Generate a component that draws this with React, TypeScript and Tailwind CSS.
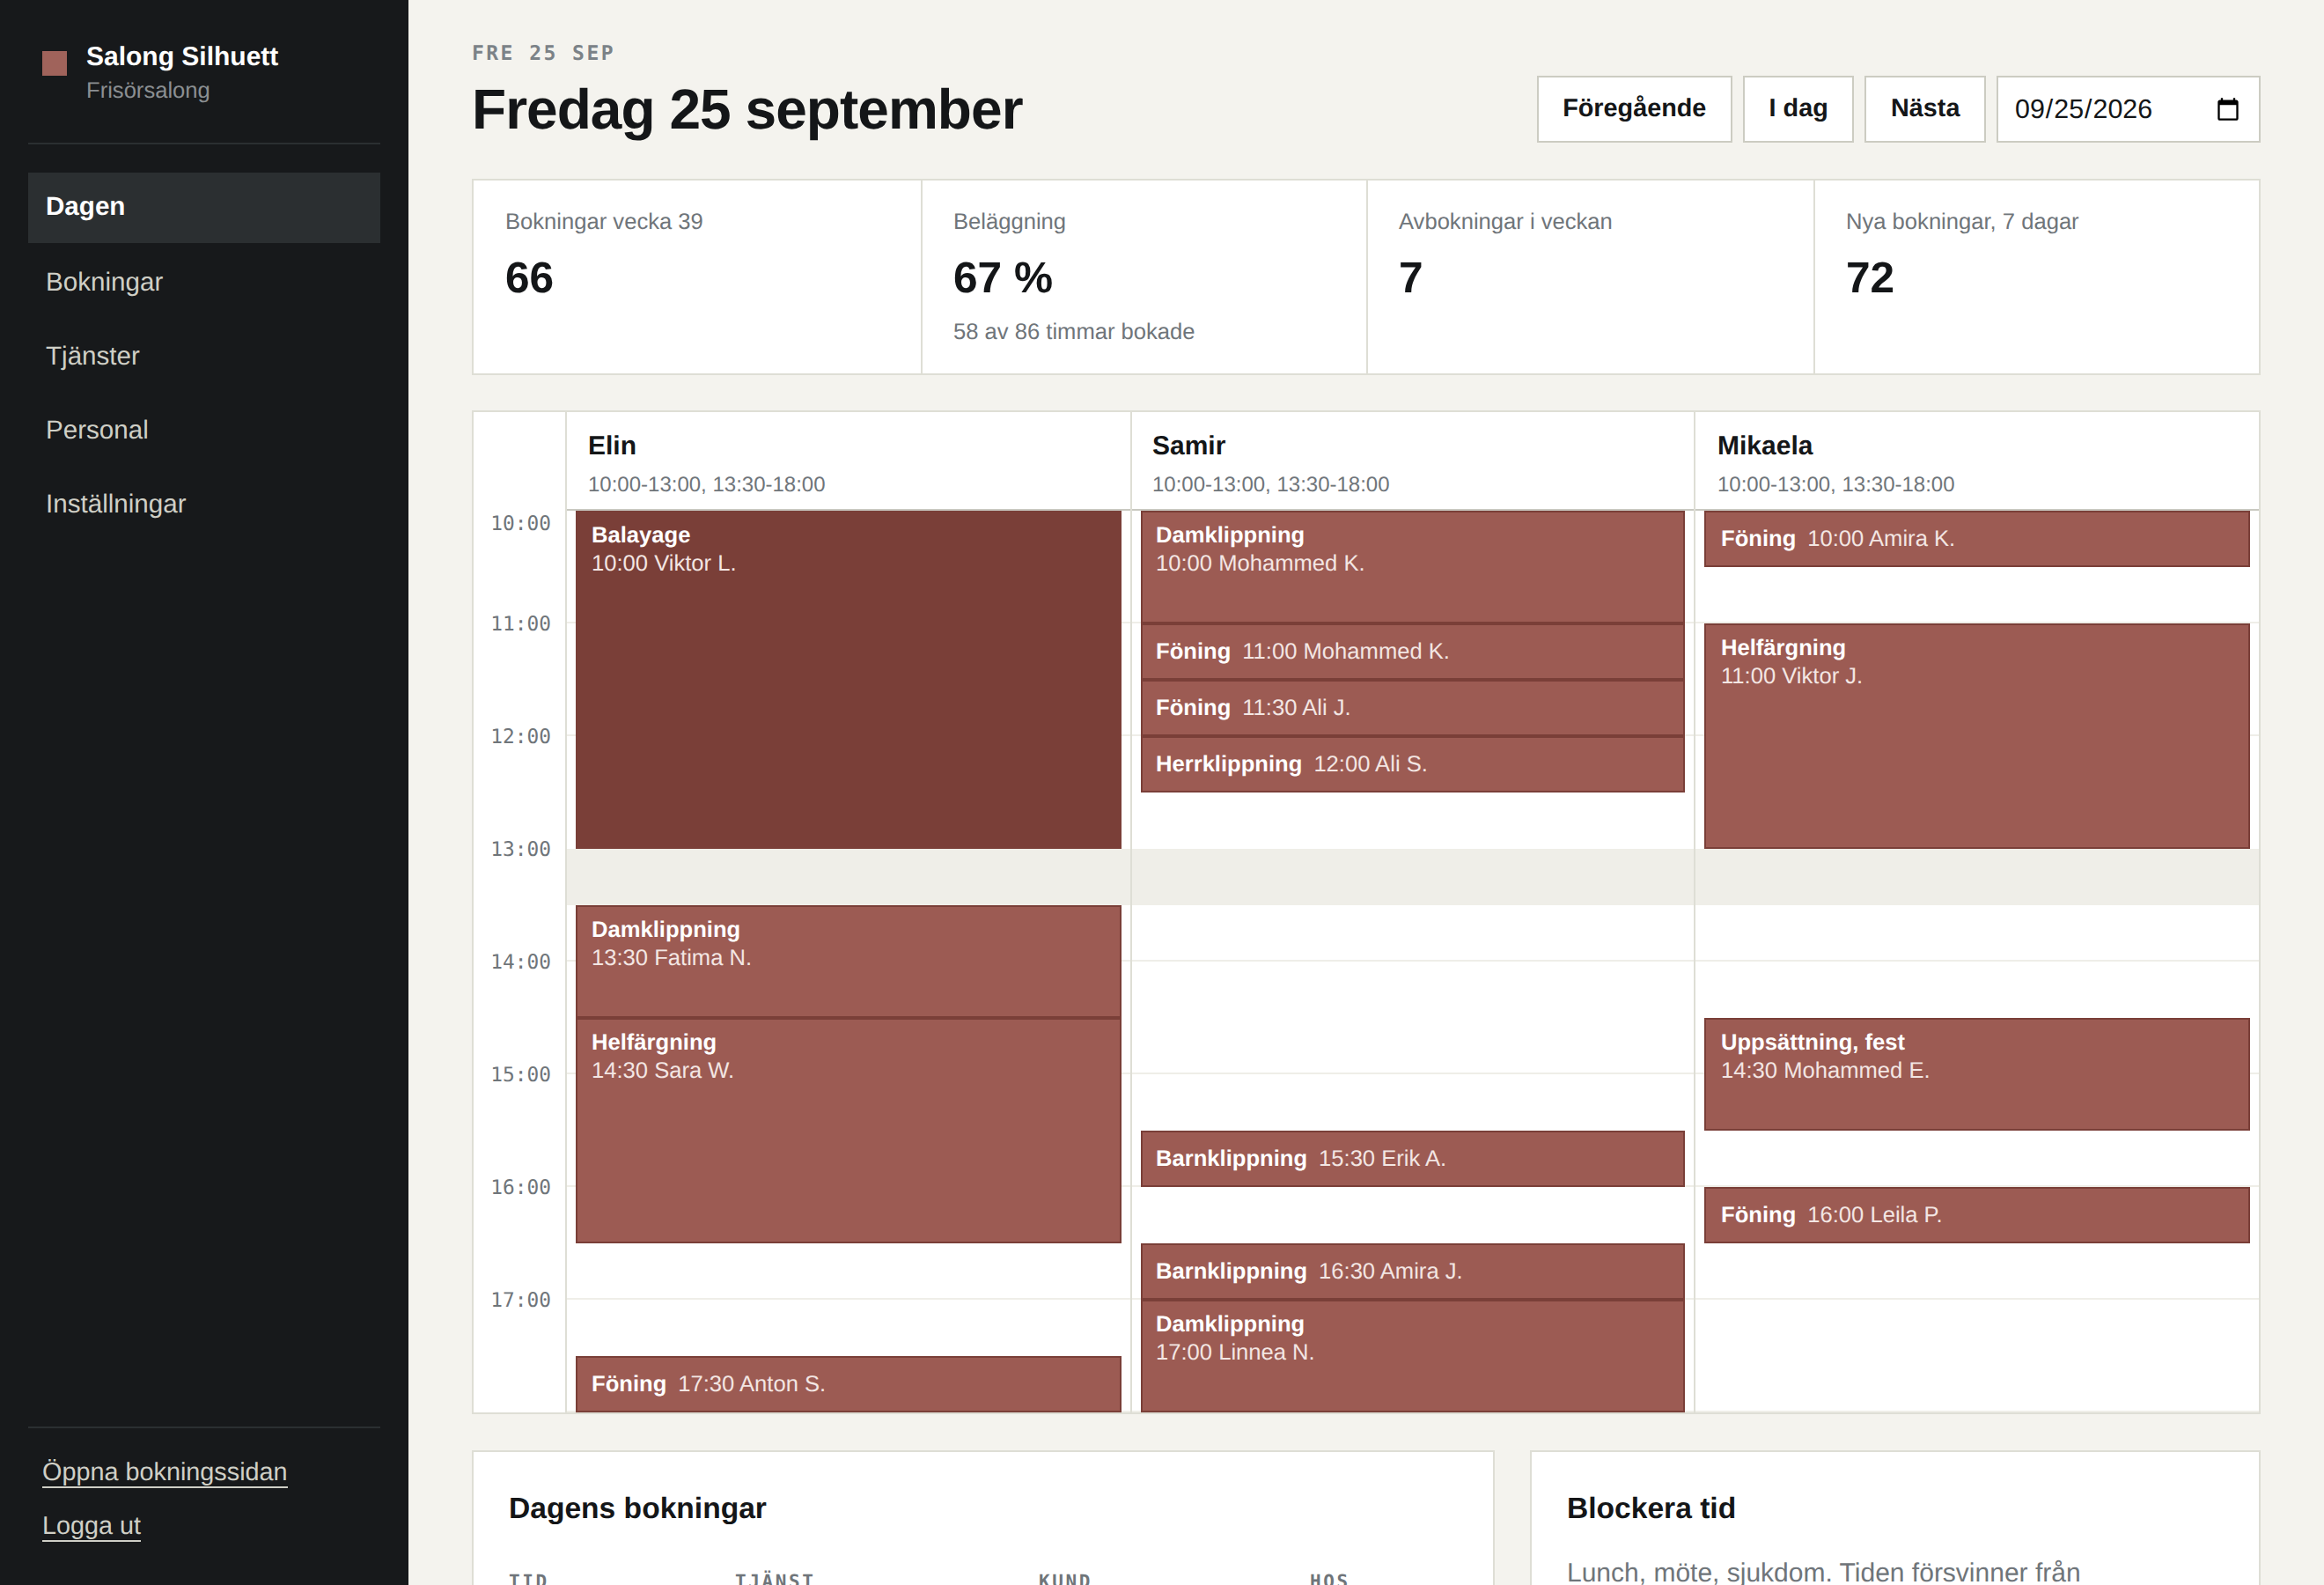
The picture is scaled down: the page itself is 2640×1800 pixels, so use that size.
const sans = "font-['Liberation_Sans',Arial,sans-serif]";

type Ev = { s: number; d: number; t: string; i: string; on?: boolean };
const cols: { name: string; head: string; text: string; ev: Ev[] }[] = [
  {
    name: "Elin",
    head: "pl-[24px]",
    text: "px-[16px]",
    ev: [
      { s: 10, d: 3, t: "Balayage", i: "10:00 Viktor L.", on: true },
      { s: 13.5, d: 1, t: "Damklippning", i: "13:30 Fatima N." },
      { s: 14.5, d: 2, t: "Helfärgning", i: "14:30 Sara W." },
      { s: 17.5, d: 0.5, t: "Föning", i: "17:30 Anton S." },
    ],
  },
  {
    name: "Samir",
    head: "pl-[23px]",
    text: "px-[15px]",
    ev: [
      { s: 10, d: 1, t: "Damklippning", i: "10:00 Mohammed K." },
      { s: 11, d: 0.5, t: "Föning", i: "11:00 Mohammed K." },
      { s: 11.5, d: 0.5, t: "Föning", i: "11:30 Ali J." },
      { s: 12, d: 0.5, t: "Herrklippning", i: "12:00 Ali S." },
      { s: 15.5, d: 0.5, t: "Barnklippning", i: "15:30 Erik A." },
      { s: 16.5, d: 0.5, t: "Barnklippning", i: "16:30 Amira J." },
      { s: 17, d: 1, t: "Damklippning", i: "17:00 Linnea N." },
    ],
  },
  {
    name: "Mikaela",
    head: "pl-[25px]",
    text: "px-[17px]",
    ev: [
      { s: 10, d: 0.5, t: "Föning", i: "10:00 Amira K." },
      { s: 11, d: 2, t: "Helfärgning", i: "11:00 Viktor J." },
      { s: 14.5, d: 1, t: "Uppsättning, fest", i: "14:30 Mohammed E." },
      { s: 16, d: 0.5, t: "Föning", i: "16:00 Leila P." },
    ],
  },
];
const hours = [10, 11, 12, 13, 14, 15, 16, 17];
const stats = [
  { l: "Bokningar vecka 39", v: "66" },
  { l: "Beläggning", v: "67 %", s: "58 av 86 timmar bokade" },
  { l: "Avbokningar i veckan", v: "7" },
  { l: "Nya bokningar, 7 dagar", v: "72" },
];
const HOUR = 128;

function Block({ e, text }: { e: Ev; text: string }) {
  const short = e.d <= 0.5;
  return (
    <div
      className={`absolute left-[10px] right-[10px] border-2 text-[25.6px] leading-[32px] overflow-hidden ${text} ${
        e.on ? "bg-[#7a3f38] border-[#7a3f38]" : "bg-[#9c5b53] border-[#7a3f38]"
      } ${short ? "flex items-center" : "py-[10px]"}`}
      style={{ top: (e.s - 10) * HOUR, height: e.d * HOUR }}
    >
      {short ? (
        <>
          <span className="font-bold text-white mr-[13px]">{e.t}</span>
          <span className="text-[#f3e6e3]">{e.i}</span>
        </>
      ) : (
        <>
          <div className="font-bold text-white">{e.t}</div>
          <div className="text-[#f3e6e3]">{e.i}</div>
        </>
      )}
    </div>
  );
}

function Btn({ children }: { children: string }) {
  return (
    <button className="h-[76px] px-[27.6px] bg-white border-2 border-[#ccccc2] text-[28.8px] font-bold text-[#141618] [text-rendering:geometricPrecision]">
      {children}
    </button>
  );
}

export default function App() {
  return (
    <div className={`flex h-screen overflow-hidden bg-[#f4f3ee] text-[#141618] [text-rendering:geometricPrecision] ${sans}`}>
      <aside className="w-[464px] shrink-0 h-full bg-[#17191b] px-[32px] flex flex-col">
        <div className="flex items-start h-[164px] border-b-2 border-[#2b2f31] pt-[47px] px-[16px]">
          <div className="w-[28px] h-[28px] mt-[11px] bg-[#a0635b] mr-[22px]" />
          <div>
            <div className="text-[30px] leading-[36px] font-bold text-white">Salong Silhuett</div>
            <div className="text-[25.6px] leading-[32px] mt-[4px] text-[#8b8f92]">Frisörsalong</div>
          </div>
        </div>
        <nav className="mt-[32px] flex flex-col gap-[4px] text-[29.6px] text-[#cfcfc6]">
          <div className="h-[80px] flex items-center px-[20px] pb-[2px] bg-[#2b2f31] text-white font-bold">Dagen</div>
          <div className="h-[80px] flex items-center px-[20px] pt-[2px]">Bokningar</div>
          <div className="h-[80px] flex items-center px-[20px] pt-[2px]">Tjänster</div>
          <div className="h-[80px] flex items-center px-[20px] pt-[2px]">Personal</div>
          <div className="h-[80px] flex items-center px-[20px] pt-[2px]">Inställningar</div>
        </nav>
        <div className="mt-auto h-[180px] border-t-2 border-[#2b2f31] pt-[34px] px-[16px] flex flex-col items-start gap-[27px] text-[28.8px] leading-[32px] text-[#cfcfc6]">
          <span className="border-b-2 border-[#cfcfc6]">Öppna bokningssidan</span>
          <span className="border-b-2 border-[#cfcfc6]">Logga ut</span>
        </div>
      </aside>

      <main className="flex-1 min-w-0 h-full overflow-hidden px-[72px] pt-[44px]">
        <header className="flex justify-between items-end h-[118px]">
          <div>
            <div className="font-['DejaVu_Sans_Mono',monospace] font-bold text-[23px] leading-[28px] tracking-[2.45px] text-[#7b8287] -mt-[4px]">
              FRE 25 SEP
            </div>
            <h1 className="mt-[11px] text-[64px] leading-[76px] font-bold tracking-[-0.96px] text-[#141618]">
              Fredag 25 september
            </h1>
          </div>
          <div className="flex gap-[12px] items-center">
            <Btn>Föregående</Btn>
            <Btn>I dag</Btn>
            <Btn>Nästa</Btn>
            <input
              type="date"
              defaultValue="2026-09-25"
              className="w-[300px] h-[76px] px-[18px] pt-[2px] bg-white border-2 border-[#ccccc2] text-[30.4px] text-[#141618] [text-rendering:geometricPrecision]"
            />
          </div>
        </header>

        <section className="mt-[41px] h-[223px] grid grid-cols-[510px_506px_508px_1fr] bg-white border-2 border-[#deded5]">
          {stats.map((s, i) => (
            <div
              key={s.l}
              className={`pt-[31px] ${i === 0 ? "pl-[36px]" : "pl-[35px]"} ${i < 3 ? "border-r-2 border-[#deded5]" : ""}`}
            >
              <div className="text-[25.6px] leading-[32px] text-[#6f757a]">{s.l}</div>
              <div className="mt-[18px] text-[49.6px] leading-[58px] font-bold">{s.v}</div>
              {s.s && <div className="mt-[17px] text-[25.6px] leading-[32px] text-[#6f757a]">{s.s}</div>}
            </div>
          ))}
        </section>

        <section className="mt-[40px] h-[1140px] bg-white border-2 border-[#deded5] flex overflow-hidden">
          <div className="w-[104px] shrink-0 relative font-['DejaVu_Sans_Mono',monospace] text-[22.8px] leading-[28px] text-[#6f757a]">
            {hours.map((h, i) => (
              <div
                key={h}
                className="absolute right-[16px]"
                style={{ top: i === 0 ? 113 : 99 + i * HOUR }}
              >
                {h}:00
              </div>
            ))}
          </div>
          <div className="flex-1 grid grid-cols-[642px_640px_642px] min-w-0">
            {cols.map((c) => (
              <div key={c.name} className="border-l-2 border-[#deded5] flex flex-col min-w-0">
                <div className={`h-[112px] border-b-2 border-[#c9c9c1] pt-[21px] ${c.head}`}>
                  <div className="text-[30px] leading-[36px] font-bold">{c.name}</div>
                  <div className="mt-[11px] text-[24px] leading-[30px] text-[#6f757a]">10:00-13:00, 13:30-18:00</div>
                </div>
                <div className="relative flex-1">
                  <div className="absolute inset-x-0 top-[384px] h-[64px] bg-[#efeee8]" />
                  {[1, 2, 4, 5, 6, 7, 8].map((h) => (
                    <div
                      key={h}
                      className="absolute inset-x-0 h-[2px] bg-[#efeee8]"
                      style={{ top: h * HOUR - 2 }}
                    />
                  ))}
                  {c.ev.map((e) => (
                    <Block key={e.t + e.s} e={e} text={c.text} />
                  ))}
                </div>
              </div>
            ))}
          </div>
        </section>

        <section className="mt-[41px] grid grid-cols-[1.4fr_1fr] gap-[40px]">
          <div className="bg-white border-2 border-[#deded5] px-[40px] pt-[45px] h-[400px]">
            <h2 className="text-[33.6px] leading-[40px] font-bold">Dagens bokningar</h2>
            <div className="mt-[48px] grid grid-cols-[257px_345px_308px_1fr] font-['DejaVu_Sans_Mono',monospace] font-bold text-[21px] leading-[28px] tracking-[2.6px] text-[#6f757a]">
              <div>TID</div>
              <div>TJÄNST</div>
              <div>KUND</div>
              <div>HOS</div>
            </div>
          </div>
          <div className="bg-white border-2 border-[#deded5] px-[40px] pt-[45px] h-[400px]">
            <h2 className="text-[33.6px] leading-[40px] font-bold">Blockera tid</h2>
            <p className="mt-[33px] text-[30px] leading-[40px] text-[#6f757a]">
              Lunch, möte, sjukdom. Tiden försvinner från bokningssidan.
            </p>
          </div>
        </section>
      </main>
    </div>
  );
}
